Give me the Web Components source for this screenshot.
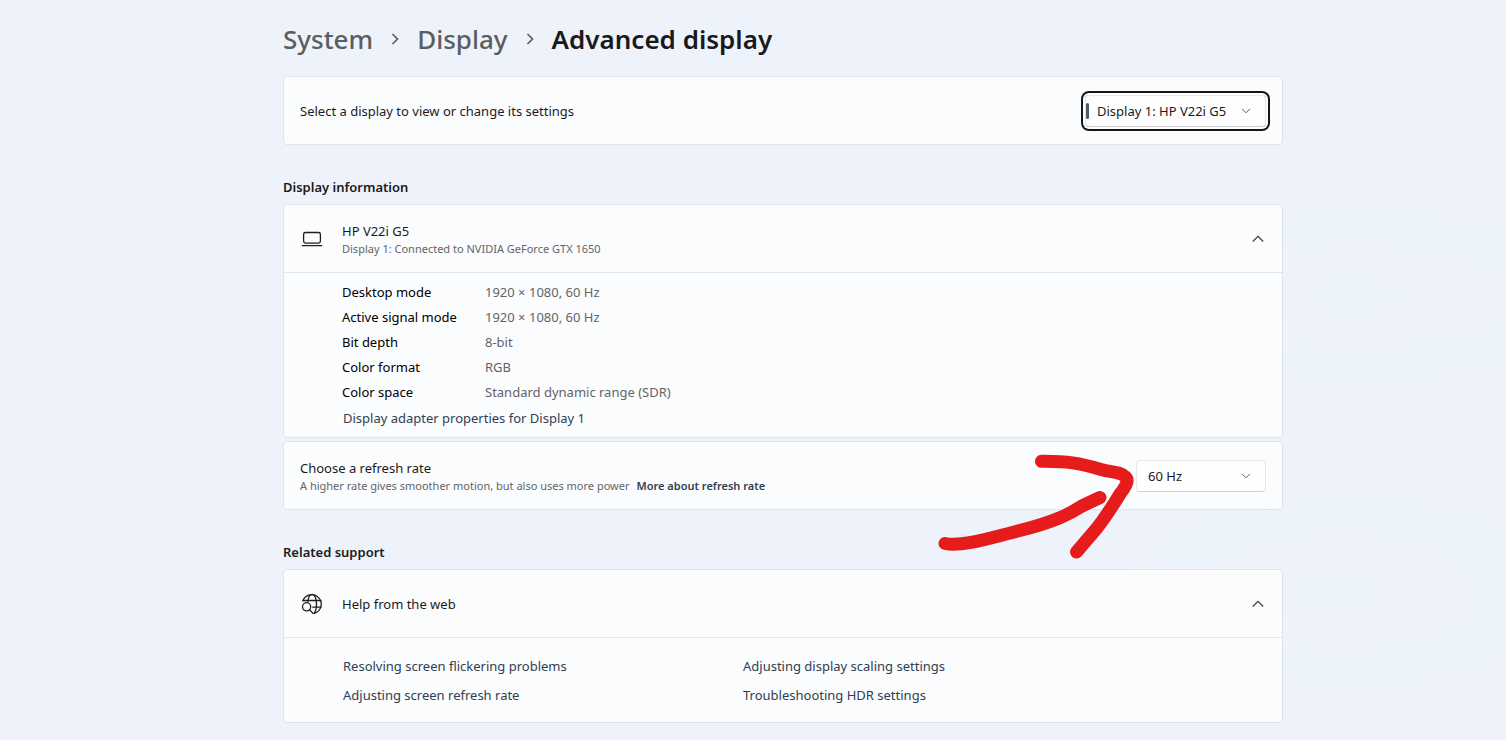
<!DOCTYPE html>
<html lang="en">
<head>
<meta charset="utf-8">
<title>Settings - Advanced display</title>
<style>
  html {
    min-height: 100%;
    background:
      radial-gradient(ellipse at 90% 40%, #edf4f8 0%, transparent 14%),
      radial-gradient(ellipse at 89% 80%, #edf4f8 0%, transparent 12%),
      #eef3fb;
  }

  body {
    margin: 0;
    font-family: "Noto Sans", "Open Sans", sans-serif;
    font-size: 13px;
    line-height: 20px;
    color: #1b1b1c;
    --card: #fbfcfe;
    --line: #e0e5ea;
    --muted: #636466;
    --link: #2f4050;
  }
</style>
</head>
<body>
<settings-page>
  <bread-crumb slot="title">
    <a href="#system">System</a>
    <a href="#display">Display</a>
    <span>Advanced display</span>
  </bread-crumb>

  <select-card label="Select a display to view or change its settings" options="Display 1: HP V22i G5" size="wide" active></select-card>

  <settings-section heading="Display information">
    <expander-card heading="HP V22i G5" hint="Display 1: Connected to NVIDIA GeForce GTX 1650" icon="laptop">
      <display-details></display-details>
    </expander-card>
    <select-card label="Choose a refresh rate" hint="A higher rate gives smoother motion, but also uses more power" link="More about refresh rate" options="60 Hz">
      <red-arrow></red-arrow>
    </select-card>
  </settings-section>

  <settings-section heading="Related support">
    <expander-card heading="Help from the web" icon="globe">
      <help-links></help-links>
    </expander-card>
  </settings-section>
</settings-page>

<script>
const ICONS = {
  laptop: `
    <svg width="22" height="22" viewBox="0 0 22 22" fill="none" stroke="#1f1f20" stroke-width="1.3">
      <rect x="2.6" y="4.5" width="16.8" height="10.6" rx="1.8"/>
      <path d="M1.2 17.6h19.6" stroke-linecap="round"/>
    </svg>`,
  globe: `
    <svg width="22" height="22" viewBox="0 0 22 22" fill="none" stroke="#1f1f20" stroke-width="1.3" stroke-linecap="round">
      <path d="M1.8 7.8A9.5 9.5 0 1 1 13.5 20.2"/>
      <path d="M2.2 7.5H20M11.8 14.2H20"/>
      <path d="M7 8.5C7.3 4.4 8.9 1.4 11.2 1.4c2.6 0 4.3 4.3 4.3 9.6 0 4-.9 7.6-2.4 9.2"/>
      <circle cx="5.6" cy="13.8" r="4.1"/>
      <path d="M8.600 16.800l3.600 3.800"/>
    </svg>`
};

class SettingsPage extends HTMLElement {
  constructor() {
    super();
    this.attachShadow({ mode: 'open' });
    this.shadowRoot.innerHTML = `
      <style>
        :host { display: block; padding: 20px 0 17px 60px; }
        main { max-width: 1000px; margin: 0 auto; }
      </style>
      <main>
        <slot name="title"></slot>
        <slot></slot>
      </main>
    `;
  }
}

class BreadCrumb extends HTMLElement {
  connectedCallback() {
    this.attachShadow({ mode: 'open' });
    const items = [...this.children];
    const chevron = `<svg width="10" height="12" viewBox="0 0 10 12" fill="none" stroke="#5c5d5f" stroke-width="1.7"><path d="M2.5 1L7.5 6l-5 5"/></svg>`;
    const parts = items.map((item) => item.href
      ? `<a href="${item.getAttribute('href')}">${item.textContent}</a>`
      : `<h1>${item.textContent}</h1>`);

    this.shadowRoot.innerHTML = `
      <style>
        :host { display: block; margin-bottom: 18px; }
        nav {
          display: flex;
          align-items: center;
          gap: 17px;
          font-size: 26px;
          font-weight: 600;
          line-height: 38px;
        }
        a { color: #5c5d5f; text-decoration: none; font-weight: 500; }
        h1 { margin: 0; font: inherit; color: #1a1a1b; }
      </style>
      <nav aria-label="Breadcrumb">${parts.join(chevron)}</nav>
    `;
  }
}

class SettingsSection extends HTMLElement {
  constructor() {
    super();
    this.attachShadow({ mode: 'open' });
    this.shadowRoot.innerHTML = `
      <style>
        :host { display: block; margin-top: 32px; }
        h2 { margin: 0 0 7px; font-size: 13px; font-weight: 600; line-height: 20px; }
        div { display: flex; flex-direction: column; gap: 3px; }
      </style>
      <h2>${this.getAttribute('heading')}</h2>
      <div><slot></slot></div>
    `;
  }
}

class SelectCard extends HTMLElement {
  constructor() {
    super();
    this.attachShadow({ mode: 'open' });
    const hint = this.getAttribute('hint');
    const options = this.getAttribute('options').split('|');

    this.shadowRoot.innerHTML = `
      <style>
        :host {
          display: flex;
          position: relative;
          align-items: center;
          justify-content: space-between;
          box-sizing: border-box;
          min-height: 69px;
          padding: 0 16px;
          background: var(--card);
          border: 1px solid var(--line);
          border-radius: 4px;
        }
        label { display: block; }
        .hint { display: flex; gap: 7px; font-size: 11px; line-height: 16px; color: var(--muted); }
        .hint a { color: var(--link); font-weight: 600; text-decoration: none; }
        .box { display: grid; align-items: center; width: 130px; }
        .box > * { grid-area: 1 / 1; }
        select {
          appearance: none;
          width: 100%;
          height: 32px;
          padding: 0 32px 0 11px;
          font: inherit;
          color: inherit;
          background: #fefefe;
          border: 1px solid #e6e8ea;
          border-bottom-color: #cfd1d3;
          border-radius: 4px;
          outline: none;
        }
        svg { justify-self: end; margin-right: 15px; pointer-events: none; }
        i { display: none; width: 3px; height: 16px; margin-left: 1px; border-radius: 2px; background: #465c6c; }
        :host([size="wide"]) .box { width: 181px; }
        :host([active]) .box { border-radius: 4px; box-shadow: 0 0 0 2px #fdfdfe, 0 0 0 4px #151617; }
        :host([active]) i { display: block; }
      </style>
      <div>
        <label for="choice">${this.getAttribute('label')}</label>
        ${hint ? `<div class="hint"><span>${hint}</span><a href="#refresh">${this.getAttribute('link')}</a></div>` : ''}
      </div>
      <div class="box">
        <select id="choice">${options.map((o) => `<option>${o}</option>`).join('')}</select>
        <i></i>
        <svg width="10" height="6" viewBox="0 0 10 6" fill="none" stroke="#5d5e60"><path d="M1 .8l4 4 4-4"/></svg>
      </div>
      <slot></slot>
    `;
  }
}

class ExpanderCard extends HTMLElement {
  constructor() {
    super();
    this.attachShadow({ mode: 'open' });
    const hint = this.getAttribute('hint');

    this.shadowRoot.innerHTML = `
      <style>
        :host {
          display: block;
          background: var(--card);
          border: 1px solid var(--line);
          border-radius: 4px;
        }
        button {
          display: flex;
          align-items: center;
          width: 100%;
          height: 67px;
          padding: 0 18px 0 17px;
          font: inherit;
          color: inherit;
          text-align: left;
          background: none;
          border: 0;
        }
        .text { flex: 1; margin-left: 19px; }
        .text span { display: block; }
        .text .hint { font-size: 11px; line-height: 16px; color: var(--muted); }
        .body { border-top: 1px solid var(--line); }
        .body[hidden] { display: none; }
        [aria-expanded="false"] .arrow { transform: rotate(180deg); }
      </style>
      <button aria-expanded="true">
        ${ICONS[this.getAttribute('icon')]}
        <span class="text">
          <span>${this.getAttribute('heading')}</span>
          ${hint ? `<span class="hint">${hint}</span>` : ''}
        </span>
        <svg class="arrow" width="12" height="8" viewBox="0 0 12 8" fill="none" stroke="#3c3d3f" stroke-width="1.2"><path d="M.8 6.5L6 1.3l5.2 5.2"/></svg>
      </button>
      <div class="body"><slot></slot></div>
    `;

    const button = this.shadowRoot.querySelector('button');
    const body = this.shadowRoot.querySelector('.body');
    button.addEventListener('click', () => {
      body.hidden = !body.hidden;
      button.setAttribute('aria-expanded', String(!body.hidden));
    });
  }
}

class DisplayDetails extends HTMLElement {
  constructor() {
    super();
    this.attachShadow({ mode: 'open' });
    const rows = [
      ['Desktop mode', '1920 × 1080, 60 Hz'],
      ['Active signal mode', '1920 × 1080, 60 Hz'],
      ['Bit depth', '8-bit'],
      ['Color format', 'RGB'],
      ['Color space', 'Standard dynamic range (SDR)']
    ];

    this.shadowRoot.innerHTML = `
      <style>
        :host { display: block; padding: 6px 16px 6px 58px; }
        table { margin-bottom: 1px; border-collapse: collapse; }
        th, td { height: 25px; padding: 0; text-align: left; font-weight: 400; }
        th { width: 143px; color: #000; }
        td { color: var(--muted); }
        a { display: block; width: fit-content; margin-left: 1px; line-height: 26px; color: var(--link); text-decoration: none; }
      </style>
      <table>
        ${rows.map(([name, value]) => `<tr><th scope="row">${name}</th><td>${value}</td></tr>`).join('')}
      </table>
      <a href="#adapter">Display adapter properties for Display 1</a>
    `;
  }
}

class HelpLinks extends HTMLElement {
  constructor() {
    super();
    this.attachShadow({ mode: 'open' });
    this.shadowRoot.innerHTML = `
      <style>
        :host {
          display: grid;
          grid-template-columns: 400px 1fr;
          padding: 14px 16px 12px 59px;
          line-height: 29px;
        }
        a { justify-self: start; color: var(--link); text-decoration: none; }
      </style>
      <a href="#flicker">Resolving screen flickering problems</a>
      <a href="#scaling">Adjusting display scaling settings</a>
      <a href="#rate">Adjusting screen refresh rate</a>
      <a href="#hdr">Troubleshooting HDR settings</a>
    `;
  }
}

// hand drawn pointer lying over the card, aimed at its drop-down
class RedArrow extends HTMLElement {
  constructor() {
    super();
    this.attachShadow({ mode: 'open' });
    this.shadowRoot.innerHTML = `
      <style>
        :host { position: absolute; top: 10px; right: 146px; pointer-events: none; }
        svg { display: block; }
      </style>
      <svg width="200" height="110" viewBox="0 0 200 110" fill="none" stroke="#e61c1c" stroke-width="13" stroke-linecap="round" stroke-linejoin="round">
        <path d="M105.5 9.3C130 9 144 11 165 17.5C176 20.5 184 19.500 189 24.500C193 28 191 33 184 42C176 55 168 67 161 76L140.500 100"/>
        <path d="M9 91.500C26 95 54 86 80 79.500C120 70 135 61 146 54L164 45.500"/>
      </svg>
    `;
  }
}

customElements.define('settings-page', SettingsPage);
customElements.define('bread-crumb', BreadCrumb);
customElements.define('settings-section', SettingsSection);
customElements.define('select-card', SelectCard);
customElements.define('expander-card', ExpanderCard);
customElements.define('display-details', DisplayDetails);
customElements.define('help-links', HelpLinks);
customElements.define('red-arrow', RedArrow);
</script>
</body>
</html>
